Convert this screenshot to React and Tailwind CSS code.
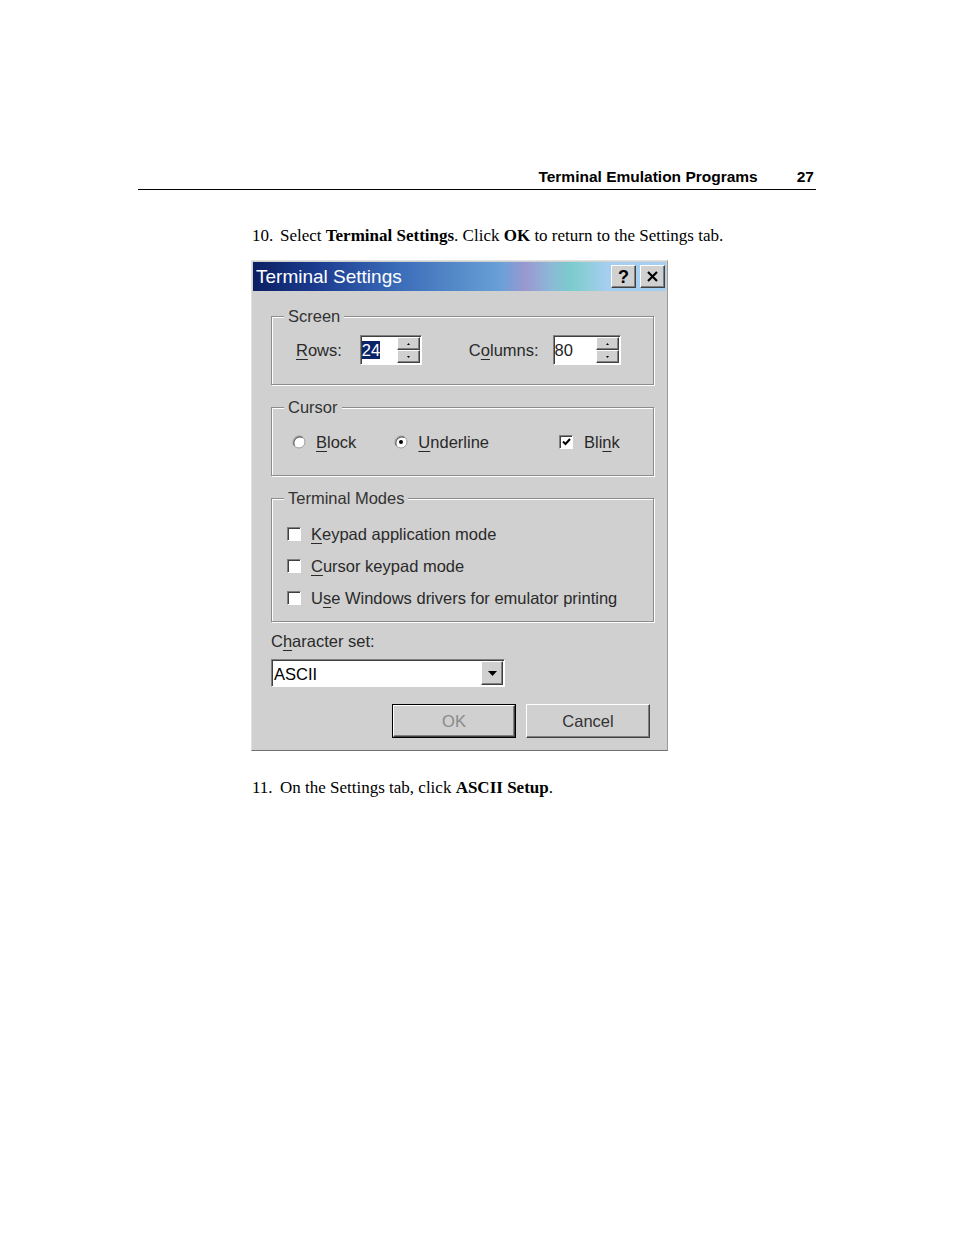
import React from 'react';

const dlgFont = "font-['Liberation_Sans',Arial,sans-serif]";

// mnemonic underline
const U = ({ children }) => <span className="underline underline-offset-[3px] decoration-1">{children}</span>;

const Raised = ({ className = '', children }) => (
  <div className={`bg-[#d0d0d0] border border-t-white border-l-white border-b-[#404040] border-r-[#404040] shadow-[inset_-1px_-1px_0_#808080] flex items-center justify-center ${className}`}>
    {children}
  </div>
);

const Sunken = ({ className = '', children }) => (
  <div className={`bg-white border border-t-[#808080] border-l-[#808080] border-b-white border-r-white shadow-[inset_1px_1px_0_#404040] ${className}`}>
    {children}
  </div>
);

const Arrow = ({ up, size = 5 }) => (
  <svg width={size * 2 - 1} height={size} viewBox={`0 0 ${size * 2 - 1} ${size}`}>
    <polygon points={up ? `0,${size} ${size - 0.5},0 ${size * 2 - 1},${size}` : `0,0 ${size * 2 - 1},0 ${size - 0.5},${size}`} fill="#000" />
  </svg>
);

const Spin = ({ value, width, selected }) => (
  <Sunken className={`h-[30px] flex ${width}`}>
    <div className="flex-1 pl-[1px] pt-[4px] text-[16.5px] leading-[20px]">
      <span className={selected ? 'bg-[#0a246a] text-white' : 'text-[#222]'}>{value}</span>
    </div>
    <div className="w-[25px] flex flex-col p-[1px]">
      <Raised className="flex-1"><Arrow up size={2} /></Raised>
      <Raised className="flex-1"><Arrow size={2} /></Raised>
    </div>
  </Sunken>
);

const Check = ({ checked }) => (
  <Sunken className="w-[14px] h-[14px] flex items-center justify-center shrink-0">
    {checked && (
      <svg width="9" height="8" viewBox="0 0 9 8">
        <path d="M1 3.5 L3.5 6 L8 1" stroke="#000" strokeWidth="2" fill="none" />
      </svg>
    )}
  </Sunken>
);

const Radio = ({ checked }) => (
  <svg width="14" height="14" viewBox="0 0 14 14" className="shrink-0">
    <circle cx="7" cy="7" r="6" fill="#fff" stroke="#9a9a9a" strokeWidth="1" />
    <path d="M2.5 10.5 A6 6 0 0 1 10.5 2.5" stroke="#606060" strokeWidth="1.2" fill="none" />
    {checked && <circle cx="7" cy="7" r="2" fill="#000" />}
  </svg>
);

const Group = ({ title, className = '', children }) => (
  <fieldset className={`mr-[12px] ml-[18px] border border-[#8c8c8c] shadow-[inset_1px_1px_0_#fff,1px_1px_0_#fff] ${className}`}>
    <legend className="ml-[12px] px-[4px] bg-[#d0d0d0] text-[16.5px] leading-[20px] text-[#333]">{title}</legend>
    {children}
  </fieldset>
);

const Step = ({ n, children }) => (
  <div className="flex text-[17px] leading-[20px] text-black font-['Liberation_Serif','Times_New_Roman',serif]">
    <span className="w-[28px] shrink-0">{n}</span>
    <span>{children}</span>
  </div>
);

export default function App() {
  return (
    <div className="w-[954px] h-[1235px] bg-white">
      <div className="ml-[138px] w-[678px] pt-[168px]">
        <div className="flex justify-end items-center border-b border-black pb-[3px] h-[22px] leading-[18px] text-[15.5px] font-bold font-['Liberation_Sans',Arial,sans-serif] text-black pr-[2px]">
          <span>Terminal Emulation Programs</span>
          <span className="ml-[39px]">27</span>
        </div>

        <div className="ml-[114px] mt-[36px]">
          <Step n="10.">Select <b>Terminal Settings</b>. Click <b>OK</b> to return to the Settings tab.</Step>
        </div>

        <div className={`ml-[113px] mt-[14px] w-[417px] bg-[#d0d0d0] border border-t-[#e0e0e0] border-l-[#e0e0e0] border-b-[#707070] border-r-[#9a9a9a] p-[1px] pb-[12px] ${dlgFont}`}>
          <div className="h-[29px] flex items-center justify-between pl-[3px] pr-[1px] bg-[linear-gradient(to_right,#0b1f62_0%,#1b3a8e_15%,#3a6cb8_35%,#5a90cc_52%,#6aa0d8_60%,#9a98d0_66%,#8cb8d8_72%,#7ccccc_77%,#a6cef0_86%,#a6cef0_100%)]">
            <span className="text-white text-[19px] leading-[22px]">Terminal Settings</span>
            <div className="flex gap-[4px]">
              <Raised className="w-[25px] h-[23px]">
                <span className="text-[18px] font-bold leading-none text-black">?</span>
              </Raised>
              <Raised className="w-[25px] h-[23px]">
                <svg width="11" height="11" viewBox="0 0 11 11">
                  <path d="M1 1 L10 10 M10 1 L1 10" stroke="#000" strokeWidth="2.2" />
                </svg>
              </Raised>
            </div>
          </div>

          <div className="mt-[15px] flex flex-col text-[#2a2a2a] text-[16.5px]">
            <Group title="Screen">
              <div className="h-[58px] pt-[9px] flex items-start">
                <span className="ml-[24px] mt-[5px] leading-[20px]"><U>R</U>ows:</span>
                <div className="ml-[18px]"><Spin value="24" width="w-[62px]" selected /></div>
                <span className="ml-[47px] mt-[5px] leading-[20px]">C<U>o</U>lumns:</span>
                <div className="ml-[14px]"><Spin value="80" width="w-[68px]" /></div>
              </div>
            </Group>

            <Group title="Cursor" className="mt-[12px]">
              <div className="h-[58px] pt-[15px] flex items-start leading-[20px]">
                <div className="ml-[20px] flex items-center h-[20px]"><Radio /><span className="ml-[10px]"><U>B</U>lock</span></div>
                <div className="ml-[38px] flex items-center h-[20px]"><Radio checked /><span className="ml-[10px]"><U>U</U>nderline</span></div>
                <div className="ml-[70px] flex items-center h-[20px]"><Check checked /><span className="ml-[11px]">Bli<U>n</U>k</span></div>
              </div>
            </Group>

            <Group title="Terminal Modes" className="mt-[12px]">
              <div className="h-[113px] pt-[16px] flex flex-col gap-[12px] leading-[20px]">
                <div className="ml-[15px] flex items-center h-[20px]"><Check /><span className="ml-[10px]"><U>K</U>eypad application mode</span></div>
                <div className="ml-[15px] flex items-center h-[20px]"><Check /><span className="ml-[10px]"><U>C</U>ursor keypad mode</span></div>
                <div className="ml-[15px] flex items-center h-[20px]"><Check /><span className="ml-[10px]">U<U>s</U>e Windows drivers for emulator printing</span></div>
              </div>
            </Group>

            <div className="ml-[18px] mt-[9px] leading-[20px]">C<U>h</U>aracter set:</div>
            <Sunken className="ml-[18px] mt-[8px] w-[234px] h-[28px] flex items-stretch">
              <span className="flex-1 pl-[2px] pt-[2px] leading-[24px] text-black">ASCII</span>
              <div className="p-[1px] flex"><Raised className="w-[22px]"><Arrow size={5} /></Raised></div>
            </Sunken>

            <div className="mt-[17px] flex justify-end gap-[10px] mr-[16px]">
              <div className="border border-black">
                <Raised className="w-[122px] h-[32px] text-[#8a8a8a]">OK</Raised>
              </div>
              <Raised className="w-[124px] h-[34px] text-[#333]">Cancel</Raised>
            </div>
          </div>
        </div>

        <div className="ml-[114px] mt-[27px]">
          <Step n="11.">On the Settings tab, click <b>ASCII Setup</b>.</Step>
        </div>
      </div>
    </div>
  );
}
